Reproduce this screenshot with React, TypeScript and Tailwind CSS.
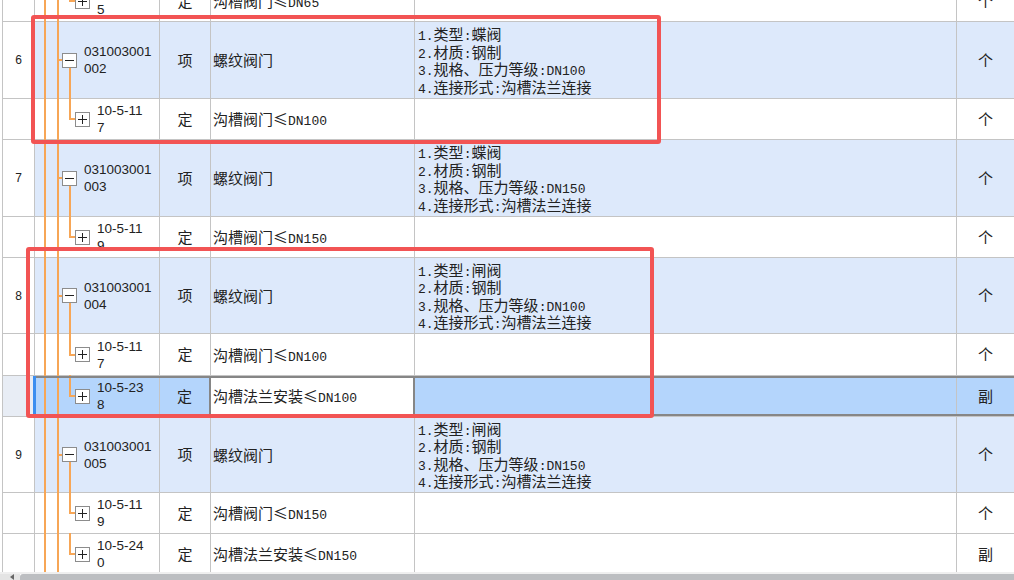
import React from 'react';

type RowData = {
  kind: 'item' | 'sub';
  num?: string;
  code: [string, string];
  type: string;
  name: string;
  desc?: string[];
  unit: string;
  h: string;
  selected?: boolean;
  extra?: string;
};

function Txt({ s }: { s: string }) {
  const parts = s.split(/([\x20-\x7e]+)/).filter(Boolean);
  return (
    <>
      {parts.map((p, i) =>
        /^[\x20-\x7e]+$/.test(p) ? (
          <span key={i} className="font-['Liberation_Mono',monospace] text-[13px] leading-[10px]">
            {p}
          </span>
        ) : (
          <span key={i}>{p}</span>
        )
      )}
    </>
  );
}

function Box({ plus }: { plus: boolean }) {
  return (
    <div className="relative z-10 w-[15px] h-[15px] shrink-0 border border-[#8c8c8c] bg-white flex items-center justify-center">
      <div className="w-[9px] h-px bg-[#222]" />
      {plus && <div className="absolute w-px h-[9px] bg-[#222]" />}
    </div>
  );
}

const desc = (kind: string, spec: string) => [
  `1.类型:${kind}`,
  '2.材质:钢制',
  `3.规格、压力等级:${spec}`,
  '4.连接形式:沟槽法兰连接',
];

const rows: RowData[] = [
  { kind: 'sub', code: ['10-5-11', '5'], type: '定', name: '沟槽阀门≤DN65', unit: '个', h: 'h-[41px]', extra: '-mt-[19px]' },
  { kind: 'item', num: '6', code: ['031003001', '002'], type: '项', name: '螺纹阀门', desc: desc('蝶阀', 'DN100'), unit: '个', h: 'h-[77px]' },
  { kind: 'sub', code: ['10-5-11', '7'], type: '定', name: '沟槽阀门≤DN100', unit: '个', h: 'h-[41px]' },
  { kind: 'item', num: '7', code: ['031003001', '003'], type: '项', name: '螺纹阀门', desc: desc('蝶阀', 'DN150'), unit: '个', h: 'h-[77px]' },
  { kind: 'sub', code: ['10-5-11', '9'], type: '定', name: '沟槽阀门≤DN150', unit: '个', h: 'h-[41px]' },
  { kind: 'item', num: '8', code: ['031003001', '004'], type: '项', name: '螺纹阀门', desc: desc('闸阀', 'DN100'), unit: '个', h: 'h-[76px]' },
  { kind: 'sub', code: ['10-5-11', '7'], type: '定', name: '沟槽阀门≤DN100', unit: '个', h: 'h-[42px]' },
  { kind: 'sub', code: ['10-5-23', '8'], type: '定', name: '沟槽法兰安装≤DN100', unit: '副', h: 'h-[41px]', selected: true },
  { kind: 'item', num: '9', code: ['031003001', '005'], type: '项', name: '螺纹阀门', desc: desc('闸阀', 'DN150'), unit: '个', h: 'h-[76px]' },
  { kind: 'sub', code: ['10-5-11', '9'], type: '定', name: '沟槽阀门≤DN150', unit: '个', h: 'h-[41px]' },
  { kind: 'sub', code: ['10-5-24', '0'], type: '定', name: '沟槽法兰安装≤DN150', unit: '副', h: 'h-[41px]' },
];

const ORANGE = 'bg-[#f7a656]';

function TreeCell({ r }: { r: RowData }) {
  const isItem = r.kind === 'item';
  return (
    <div
      className={`relative w-[125px] shrink-0 border-r border-b border-[#c4c4c4] flex items-center ${
        isItem ? 'pl-[27px]' : 'pl-[40px]'
      }`}
    >
      <div className={`absolute left-[9px] -top-px -bottom-px w-[2px] ${ORANGE}`} />
      <div className={`absolute left-[22px] -top-px -bottom-px w-[2px] ${ORANGE}`} />
      {isItem ? (
        <>
          <div className={`absolute left-[23px] top-1/2 w-[4px] h-[2px] -translate-y-px ${ORANGE}`} />
          <div className={`absolute left-[34px] top-1/2 -bottom-px w-[2px] ${ORANGE}`} />
        </>
      ) : (
        <>
          <div className={`absolute left-[34px] -top-px h-[calc(50%+2px)] w-[2px] ${ORANGE}`} />
          <div className={`absolute left-[34px] top-1/2 w-[6px] h-[2px] -translate-y-px ${ORANGE}`} />
        </>
      )}
      <Box plus={!isItem} />
      <div className="ml-[7px] font-['Liberation_Sans',Arial,sans-serif] text-[13.5px] leading-[17px] text-[#222]">
        <div>{r.code[0]}</div>
        <div>{r.code[1]}</div>
      </div>
    </div>
  );
}

function Row({ r }: { r: RowData }) {
  const isItem = r.kind === 'item';
  const bg = r.selected ? 'bg-[#b4d5fc]' : isItem ? 'bg-[#dde9fb]' : 'bg-white';
  const cjk = "font-['Noto_Sans_CJK_SC',sans-serif] text-[15px] text-[#222]";
  return (
    <div className={`relative flex shrink-0 ${r.h} ${r.extra ?? ''}`}>
      <div
        className={`w-[32px] shrink-0 border-r border-b border-[#c4c4c4] flex items-center justify-center font-['Liberation_Sans',Arial,sans-serif] text-[12px] text-[#222] ${
          r.selected ? 'bg-[#e8edf5]' : 'bg-white'
        }`}
      >
        {r.num}
      </div>
      <div className={`flex ${bg}`}>
        <TreeCell r={r} />
        <div
          className={`w-[51px] shrink-0 border-b border-[#c4c4c4] flex items-center justify-center ${cjk} ${
            r.selected ? 'border-r-2 border-r-[#868686]' : 'border-r'
          }`}
        >
          {r.type}
        </div>
        <div
          className={`w-[204px] shrink-0 border-b border-[#c4c4c4] flex items-center pl-[2px] leading-[18px] ${cjk} ${
            r.selected ? 'bg-white border-r-2 border-r-[#868686]' : 'border-r'
          }`}
        >
          <div>
            <Txt s={r.name} />
          </div>
        </div>
        <div
          className={`w-[542px] shrink-0 border-r border-b border-[#c4c4c4] flex flex-col justify-center pl-[3px] leading-[17.5px] ${cjk}`}
        >
          {r.desc?.map((d, i) => (
            <div key={i}>
              <Txt s={d} />
            </div>
          ))}
        </div>
        <div className={`w-[57px] shrink-0 border-b border-[#c4c4c4] flex items-center justify-center ${cjk}`}>
          {r.unit}
        </div>
      </div>
      {r.selected && (
        <>
          <div className="pointer-events-none absolute left-[32px] right-0 top-0 bottom-px border-y-2 border-[#868686]" />
          <div className="absolute left-[30px] top-0 bottom-[3px] w-[3px] bg-[#3b8ef0]" />
        </>
      )}
    </div>
  );
}

export default function App() {
  return (
    <div className="relative w-[1014px] h-[580px] overflow-hidden bg-white flex flex-col">
      <div className="ml-[2px] h-[572px] shrink-0 border-l border-[#c4c4c4] overflow-hidden flex flex-col">
        {rows.map((r, i) => (
          <Row key={i} r={r} />
        ))}
      </div>
      <div className="h-[8px] shrink-0 flex flex-col">
        <div className="h-[3px] bg-[#efefef]" />
        <div className="flex-1 flex">
          <div className="w-[20px] bg-[#e4e4e4] flex items-center pl-[10px]">
            <div className="w-0 h-0 border-y-[3px] border-y-transparent border-r-[4px] border-r-[#666]" />
          </div>
          <div className="flex-1 bg-[#bcbec1] rounded-tl-[3px]" />
        </div>
      </div>

      <div className="pointer-events-none absolute left-[31px] top-[15px] w-[630px] h-[129px] border-4 border-[#f25454] rounded-[3px]" />
      <div className="pointer-events-none absolute left-[26px] top-[247px] w-[628px] h-[171px] border-4 border-[#f25454] rounded-[3px]" />
    </div>
  );
}
